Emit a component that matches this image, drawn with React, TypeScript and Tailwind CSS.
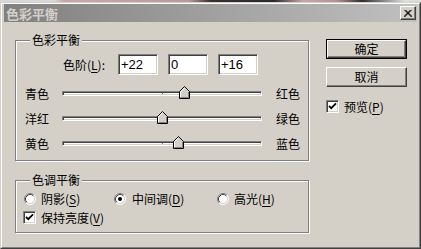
import React from "react";

const sunken =
  "border border-t-[#808080] border-l-[#808080] border-r-white border-b-white shadow-[inset_1px_1px_0_#404040,inset_-1px_-1px_0_#d4d0c8]";
const raised =
  "border border-t-white border-l-white border-r-[#404040] border-b-[#404040] shadow-[inset_-1px_-1px_0_#808080]";
const etched = "border border-[#808080] shadow-[inset_1px_1px_0_#fff,1px_1px_0_#fff]";

function U({ k }: { k: string }) {
  return <span className="underline decoration-1 underline-offset-[2px]">{k}</span>;
}

function Thumb({ left }: { left: number }) {
  return (
    <svg className="absolute top-[-6px]" style={{ left }} width="11" height="13" viewBox="0 0 11 13">
      <path d="M0.5 12.5V5.5L5.5 0.5L10.5 5.5V12.5Z" fill="#d4d0c8" stroke="#000" />
      <path d="M1.5 11.5V5.9L5.5 1.9" stroke="#fff" fill="none" />
      <path d="M9.5 5.9V11.5H1.5" stroke="#808080" fill="none" />
    </svg>
  );
}

function Slider({ left, right, value }: { left: string; right: string; value: number }) {
  return (
    <div className="flex h-[25px] items-center pl-[9px]">
      <span className="w-[37px]">{left}</span>
      <div className={`relative h-[5px] w-[200px] bg-white ${sunken}`}>
        <div className="absolute left-[99px] top-[1px] h-px w-px bg-[#808080]" />
        <Thumb left={value + 94} />
      </div>
      <span className="ml-[14px]">{right}</span>
    </div>
  );
}

function Check() {
  return (
    <div className={`h-[13px] w-[13px] bg-white ${sunken}`}>
      <svg width="11" height="11" viewBox="0 0 11 11">
        <path d="M2 5L4.2 7.2L9 2.4" stroke="#000" strokeWidth="1.8" fill="none" />
      </svg>
    </div>
  );
}

function Radio({ on }: { on?: boolean }) {
  return (
    <svg width="12" height="12" viewBox="0 0 12 12">
      <circle cx="6" cy="6" r="5" fill="#fff" />
      <path d="M2.11 9.89A5.5 5.5 0 0 1 9.89 2.11" stroke="#808080" fill="none" />
      <path d="M9.89 2.11A5.5 5.5 0 0 1 2.11 9.89" stroke="#fff" fill="none" />
      <path d="M2.82 9.18A4.5 4.5 0 0 1 9.18 2.82" stroke="#404040" fill="none" />
      <path d="M9.18 2.82A4.5 4.5 0 0 1 2.82 9.18" stroke="#d4d0c8" fill="none" />
      {on && <circle cx="6" cy="6" r="2" fill="#000" />}
    </svg>
  );
}

export default function App() {
  const values = ["+22", "0", "+16"];
  return (
    <div className="h-[249px] w-[421px] overflow-hidden bg-[#d4d0c8] font-['Noto_Sans_CJK_SC',sans-serif] text-[12px] leading-none text-black">
      <div className="h-[2px] bg-[linear-gradient(90deg,#d8d8d8_0%,#d8d8d8_13%,#c9a9a8_15%,#b89a98_45%,#3a3030_50%,#2a2a30_65%,#c8a8a8_72%,#b89090_80%,#303030_86%,#dcdcdc_96%)]" />
      <div className="h-[247px] border border-t-[#d4d0c8] border-l-[#d4d0c8] border-r-[#404040] border-b-[#404040]">
        <div className="flex h-full flex-col border border-t-white border-l-white border-r-[#808080] border-b-[#808080] px-[2px]">
          <div className="flex h-[18px] items-center justify-between bg-[linear-gradient(90deg,#808080,#c0c0c0)] pl-[2px] pr-[1px]">
            <span className="text-[13px] font-bold text-[#d4d0c8]">色彩平衡</span>
            <div className={`flex h-[14px] w-[16px] items-center justify-center bg-[#d4d0c8] ${raised}`}>
              <svg width="8" height="7" viewBox="0 0 8 7">
                <path d="M0.5 0L7.5 7M1.5 0L8.5 7M7.5 0L0.5 7M6.5 0L-0.5 7" stroke="#000" strokeWidth="1" />
              </svg>
            </div>
          </div>

          <div className="flex flex-1">
            <div className="pl-[11px] pt-[18px]">
              <div className={`relative h-[121px] w-[294px] ${etched}`}>
                <span className="absolute left-[14px] top-[-7px] bg-[#d4d0c8] px-[2px]">色彩平衡</span>
                <div className="flex h-[21px] items-center pt-0" style={{ marginTop: 13 }}>
                  <span className="ml-[47px] w-[55px]">
                    色阶(<U k="L" />):
                  </span>
                  <div className="flex gap-[10px]">
                    {values.map((v) => (
                      <div
                        key={v}
                        className={`flex h-[21px] w-[40px] items-center bg-white pl-[2px] font-['Liberation_Sans',sans-serif] text-[13px] ${sunken}`}
                      >
                        {v}
                      </div>
                    ))}
                  </div>
                </div>
                <div className="mt-[6px]">
                  <Slider left="青色" right="红色" value={22} />
                  <Slider left="洋红" right="绿色" value={0} />
                  <Slider left="黄色" right="蓝色" value={16} />
                </div>
              </div>

              <div className={`relative mt-[19px] h-[53px] w-[294px] ${etched}`}>
                <span className="absolute left-[14px] top-[-7px] bg-[#d4d0c8] px-[2px]">色调平衡</span>
                <div className="flex h-[17px] items-center pl-[8px] mt-[9px]">
                  <div className="flex w-[90px] items-center gap-[5px]">
                    <Radio />
                    <span>
                      阴影(<U k="S" />)
                    </span>
                  </div>
                  <div className="flex w-[103px] items-center gap-[6px]">
                    <Radio on />
                    <span>
                      中间调(<U k="D" />)
                    </span>
                  </div>
                  <div className="flex items-center gap-[5px]">
                    <Radio />
                    <span>
                      高光(<U k="H" />)
                    </span>
                  </div>
                </div>
                <div className="mt-[2px] flex h-[17px] items-center gap-[5px] pl-[7px]">
                  <Check />
                  <span>
                    保持亮度(<U k="V" />)
                  </span>
                </div>
              </div>
            </div>

            <div className="ml-[17px] pt-[17px]">
              <div className="h-[20px] w-[81px] border border-black">
                <div className={`flex h-full items-center justify-center ${raised}`}>确定</div>
              </div>
              <div className={`mt-[8px] flex h-[20px] w-[81px] items-center justify-center ${raised}`}>取消</div>
              <div className="mt-[13px] flex h-[13px] items-center gap-[5px]">
                <Check />
                <span>
                  预览(<U k="P" />)
                </span>
              </div>
            </div>
          </div>
        </div>
      </div>
    </div>
  );
}
